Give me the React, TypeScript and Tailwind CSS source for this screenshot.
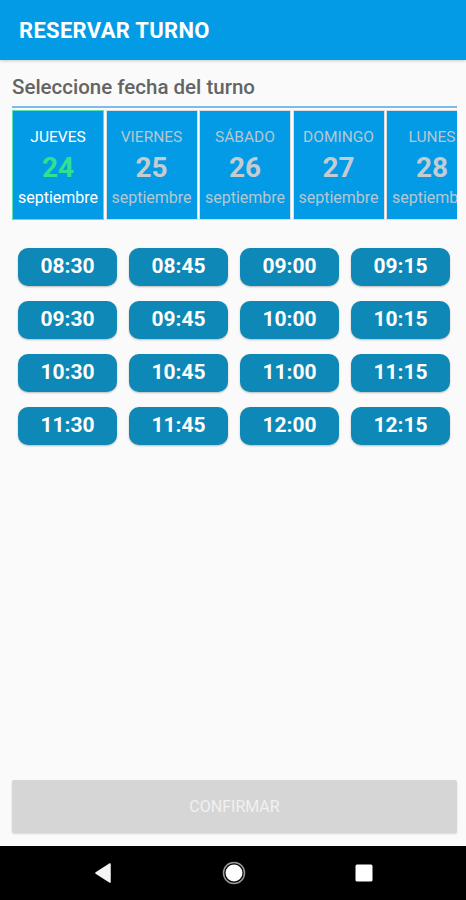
import React from "react";

const days = [
  { name: "JUEVES", num: "24", selected: true },
  { name: "VIERNES", num: "25" },
  { name: "SÁBADO", num: "26" },
  { name: "DOMINGO", num: "27" },
  { name: "LUNES", num: "28" },
];

const times = [
  "08:30", "08:45", "09:00", "09:15",
  "09:30", "09:45", "10:00", "10:15",
  "10:30", "10:45", "11:00", "11:15",
  "11:30", "11:45", "12:00", "12:15",
];

const App = () => {
  return (
    <div className="w-[466px] h-[900px] flex flex-col bg-[#fafafa] font-['Roboto','Liberation_Sans',sans-serif] overflow-hidden">
      {/* app bar */}
      <div className="h-[60px] shrink-0 bg-[#039be5] flex items-center pl-[19px] shadow-[0_1px_3px_rgba(0,0,0,0.2)]">
        <h1 className="text-white text-[22px] font-bold tracking-[0.3px]">RESERVAR TURNO</h1>
      </div>

      <div className="flex-1 flex flex-col">
        <p className="pl-[12px] pt-[14px] text-[20.5px] font-medium text-[#646464] leading-[26px]">
          Seleccione fecha del turno
        </p>

        <div className="ml-[12px] mr-[9px] mt-[6px] border-t-2 border-[#7fbbe8] pt-[2px] overflow-hidden">
          <div className="flex gap-[1.5px]">
            {days.map((d) => (
              <div
                key={d.num}
                className={
                  d.selected
                    ? "w-[92px] h-[110px] shrink-0 bg-[#039be5] border-[1.5px] border-[#5fe0b0] flex flex-col items-center justify-center pt-[5px]"
                    : "w-[92px] h-[110px] shrink-0 bg-[#039be5] border-[1.5px] border-[#dcdcdc] flex flex-col items-center justify-center pt-[5px]"
                }
              >
                <span className={d.selected ? "text-[15.5px] leading-[20px] text-white" : "text-[15.5px] leading-[20px] text-[#b6c7d2]"}>
                  {d.name}
                </span>
                <span
                  className={
                    d.selected
                      ? "text-[28px] leading-[34px] font-bold text-[#2fe38e] mt-[4px]"
                      : "text-[28px] leading-[34px] font-bold text-[#c4ccd2] mt-[4px]"
                  }
                >
                  {d.num}
                </span>
                <span className={d.selected ? "text-[16px] leading-[22px] text-white mt-[2px]" : "text-[16px] leading-[22px] text-[#b6c7d2] mt-[2px]"}>
                  septiembre
                </span>
              </div>
            ))}
          </div>
        </div>

        <div className="grid grid-cols-4 gap-x-[12px] gap-y-[15px] pl-[18px] pr-[16px] mt-[28px]">
          {times.map((t) => (
            <button
              key={t}
              className="h-[38px] rounded-[10px] bg-[#0e88b6] text-white text-[21px] font-bold shadow-[0_1px_2px_rgba(0,0,0,0.25)]"
            >
              {t}
            </button>
          ))}
        </div>
      </div>

      {/* confirm */}
      <div className="pl-[12px] pr-[9px] pb-[13px] shrink-0">
        <button className="w-full h-[53px] rounded-[2px] bg-[#d6d6d6] text-[#f1f1f1] text-[16px] shadow-[0_1px_2px_rgba(0,0,0,0.15)]">
          CONFIRMAR
        </button>
      </div>

      {/* android nav */}
      <div className="h-[54px] shrink-0 bg-black flex items-center justify-center gap-[108px]">
        <svg width="22" height="22" viewBox="0 0 22 22">
          <path d="M18 2 L4 11 L18 20 Z" fill="#f5f5f5" strokeLinejoin="round" stroke="#f5f5f5" strokeWidth="1.5" />
        </svg>
        <svg width="24" height="24" viewBox="0 0 24 24">
          <circle cx="12" cy="12" r="10.5" fill="none" stroke="#9a9a9a" strokeWidth="1.5" />
          <circle cx="12" cy="12" r="8.5" fill="#ffffff" />
        </svg>
        <svg width="20" height="20" viewBox="0 0 20 20">
          <rect x="1.5" y="1.5" width="17" height="17" rx="1.5" fill="#ffffff" />
        </svg>
      </div>
    </div>
  );
};

export default App;
